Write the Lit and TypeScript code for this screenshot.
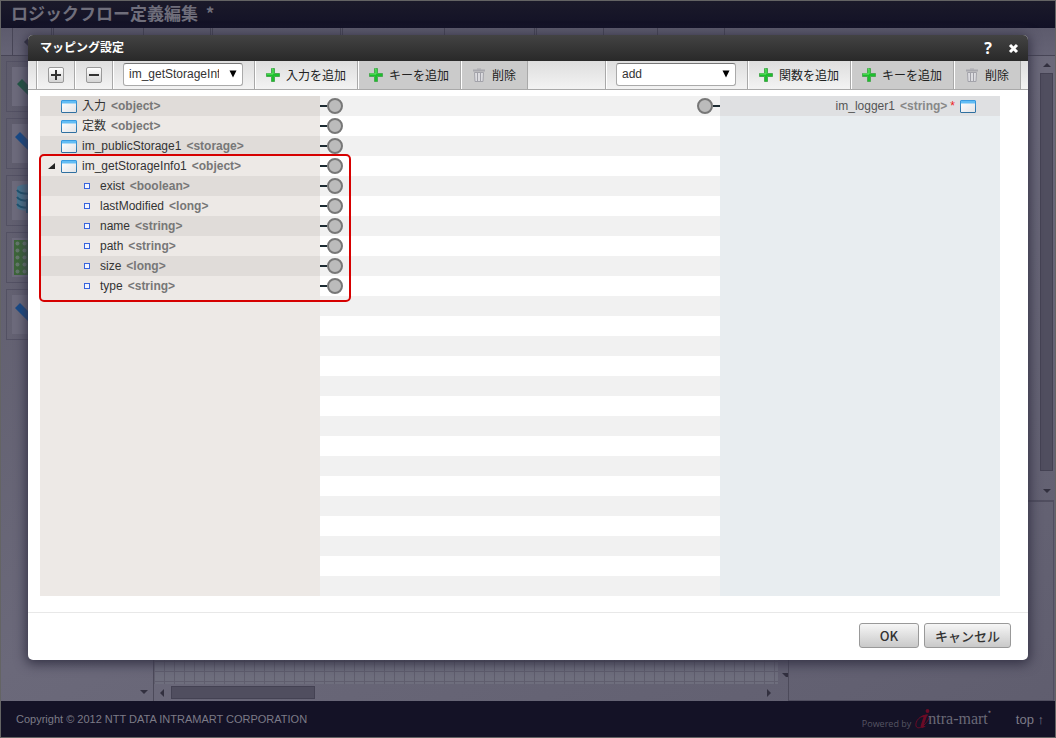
import { LitElement, html, svg, css } from "lit";
import { customElement } from "lit/decorators.js";

interface Field {
  name: string;
  type: string;
}

const inputs: Field[] = [
  { name: "入力", type: "object" },
  { name: "定数", type: "object" },
  { name: "im_publicStorage1", type: "storage" },
];

const storageInfo: Field = { name: "im_getStorageInfo1", type: "object" };

const storageFields: Field[] = [
  { name: "exist", type: "boolean" },
  { name: "lastModified", type: "long" },
  { name: "name", type: "string" },
  { name: "path", type: "string" },
  { name: "size", type: "long" },
  { name: "type", type: "string" },
];

const plusIcon = html`<svg class="icon" width="14" height="14" viewBox="0 0 14 14" aria-hidden="true">
  <path d="M5.500 .5h3v5h5v3h-5v5h-3v-5h-5v-3h5z" fill="#1cc02c" stroke="#4aa852" />
  <path d="M6 1h1v5H1" fill="none" stroke="#6be66c" />
</svg>`;

const trashIcon = html`<svg class="icon" width="14" height="14" viewBox="0 0 14 14" aria-hidden="true">
  <path d="M2.500 4.500h9l-.5 9H3z" fill="#dcdce0" stroke="#a3a3aa" />
  <path d="M1 2.500h12" stroke="#a8a8ae" stroke-width="2" />
  <path d="M5 1h4" stroke="#a8a8ae" />
  <path d="M5.500 5v8M8.500 5v8" stroke="#a0a0a8" />
</svg>`;

const windowIcon = html`<svg class="window" width="16" height="13" viewBox="0 0 16 13" aria-hidden="true">
  <defs>
    <linearGradient id="pane" x1="0" y1="0" x2="1" y2="1">
      <stop offset="0" stop-color="#ffffff" />
      <stop offset="1" stop-color="#e2e3e6" />
    </linearGradient>
    <linearGradient id="edge" x1="0" y1="0" x2="0" y2="1">
      <stop offset="0" stop-color="#3a9be0" />
      <stop offset="1" stop-color="#2f6f9f" />
    </linearGradient>
  </defs>
  <rect x=".5" y=".5" width="15" height="12" rx=".5" fill="url(#pane)" stroke="url(#edge)" />
  <path d="M1 1h14v2.500H1z" fill="#62bdf5" />
</svg>`;

const checkArt = (color: string) => svg`<path d="M3 13l5-5 8 8L28 4l5 5-17 17z" fill=${color} />`;

const greenCheckArt = svg`<path d="M5 17l5-5 8 8L30 8l5 5-17 17z" fill="#1f5742" />`;

const databaseArt = svg`
  <path d="M5 7c0-5 22-5 22 0v19c0 5-22 5-22 0z" fill="#4b7791" />
  <path d="M5 9c3 5 19 5 22 0M5 16c3 5 19 5 22 0M5 23c3 5 19 5 22 0" fill="none" stroke="#1c536f" stroke-width="2" />
  <path d="M14 18h10v14H14z" fill="#1c536f" />`;

const gridArt = svg`
  <defs>
    <pattern id="dots" x="2" y="2" width="7" height="7" patternUnits="userSpaceOnUse">
      <rect width="7" height="7" fill="#3c6638" />
      <circle cx="3.500" cy="3.500" r="2" fill="#66796c" />
    </pattern>
  </defs>
  <rect x="2" y="2" width="35" height="35" fill="url(#dots)" />`;

@customElement("app-root")
export class AppRoot extends LitElement {
  static styles = css`
    :host {
      display: block;
      font-family: "Liberation Sans", "Noto Sans CJK JP", sans-serif;
      font-size: 12px;
      color: #333;
    }
    *,
    *::before,
    *::after {
      box-sizing: border-box;
    }
    svg {
      display: block;
      flex: none;
    }
    .page {
      position: relative;
      display: grid;
      grid-template-rows: 27px 28px 1fr 36px;
      height: 100vh;
      overflow: hidden;
      border: 1px solid #646464;
      background: linear-gradient(150deg, #5c5a6a, #6b697a 50%, #5f5d6e);
    }
    .title {
      margin: 0;
      padding-left: 10px;
      background: linear-gradient(#1b1a2a, #121126);
      color: #6f6e7b;
      font: bold 17px/24px "Noto Sans CJK JP", sans-serif;
      white-space: pre;
    }
    .menu {
      display: flex;
      border-bottom: 1px solid #474556;
      background: linear-gradient(#5d5b6d, #656375);
    }
    .menu i {
      border-right: 1px solid #474556;
    }
    .menu .back {
      padding: 9px 0 0 11px;
    }
    .w1 { width: 12px; }
    .w2 { width: 39px; }
    .w3 { width: 2px; }
    .w4 { width: 90px; }
    .w5 { width: 67px; }
    .w6 { width: 128px; }
    .w7 { width: 102px; }
    .w8 { width: 54px; }
    .work {
      display: grid;
      grid-template-columns: 153px 634px 1fr;
      min-height: 0;
    }
    .palette {
      display: flex;
      flex-direction: column;
      gap: 6px;
      padding: 5px;
      border-right: 1px solid #4c4a5a;
      overflow: hidden;
    }
    .tool {
      flex: none;
      height: 51px;
      padding: 5px;
      border: 1px solid #535163;
    }
    .tool svg {
      background: #6d6b7c;
    }
    .palette .arrow {
      margin: auto 0 2px auto;
    }
    .arrow {
      fill: #32303f;
    }
    .canvas {
      display: grid;
      grid-template: 1fr 17px / 1fr 10px;
    }
    .sheet {
      background:
        linear-gradient(#605e6e 1px, transparent 1px) 0 5px / 10px 10px,
        linear-gradient(90deg, #605e6e 1px, #6e6e7d 1px) 0 0 / 10px 10px;
    }
    .vbar {
      display: flex;
      align-items: flex-end;
      padding-bottom: 7px;
    }
    .hbar {
      display: flex;
      align-items: center;
      gap: 7px;
      padding: 0 7px 0 6px;
    }
    .hbar .thumb {
      width: 144px;
      height: 13px;
      margin-right: auto;
    }
    .thumb {
      background: #504e5f;
      border: 1px solid #444253;
    }
    .side {
      display: grid;
      grid-template-rows: 444px 1fr;
      border-left: 1px solid #4c4a5a;
    }
    .scroll {
      display: flex;
      flex-direction: column;
      align-items: center;
      justify-self: end;
      gap: 6px;
      width: 17px;
      padding: 7px 0;
    }
    .scroll .thumb {
      width: 13px;
      flex: 1;
      margin-bottom: 12px;
    }
    .properties {
      margin-right: 1px;
      border: 1px solid #504e5f;
      border-width: 2px 1px 1px 0;
    }
    .footer {
      display: flex;
      align-items: center;
      padding: 0 11px 0 15px;
      background: #141226;
      color: #7c7b87;
      font-size: 11px;
    }
    .powered {
      display: flex;
      align-items: flex-end;
      gap: 4px;
      margin: 0 25px 0 auto;
      font: 9px/12px "Open Sans", sans-serif;
      color: #565563;
    }
    .brand {
      display: flex;
      align-items: center;
      font: 16px/20px "Liberation Serif", serif;
      color: #6a6976;
    }
    .brand svg {
      margin-right: -4px;
    }
    .brand sup {
      font-size: 5px;
      line-height: 8px;
      align-self: flex-start;
    }
    .footer a {
      color: #7c7b87;
      font-size: 13px;
      text-decoration: none;
    }

    .overlay {
      position: absolute;
      inset: 0;
      padding: 34px 27px 77px;
      display: grid;
    }
    .dialog {
      display: grid;
      grid-template-rows: 26px 29px 1fr 47px;
      border-radius: 5px;
      overflow: hidden;
      background: #fff;
      box-shadow: 0 2px 12px 2px #353346;
    }
    .bar {
      display: flex;
      align-items: center;
      gap: 16px;
      padding: 0 9px 0 12px;
      background: linear-gradient(#434343, #292929);
      color: #fff;
    }
    .bar h2 {
      margin: 0 auto 0 0;
      padding-bottom: 2px;
      font: bold 12px/20px "Noto Sans CJK JP", sans-serif;
    }
    .bar button {
      padding: 0;
      border: 0;
      background: none;
      color: #fff;
      font: bold 16px/20px "Open Sans", sans-serif;
    }
    .tools {
      display: flex;
      padding: 0 7px 0 8px;
      border-bottom: 1px solid #a9a9a9;
      background: linear-gradient(#dedede, #f3f3f3);
    }
    .cell {
      display: flex;
      align-items: center;
      justify-content: center;
      width: 38px;
      border-left: 1px solid #a9a9a9;
      box-shadow: inset 1px 0 #fff;
    }
    .wide {
      position: relative;
      width: 142px;
      padding: 0 11px 2px 10px;
    }
    .spacer {
      flex: 1;
      border-left: 1px solid #a9a9a9;
    }
    .fold {
      display: grid;
      place-items: center;
      width: 16px;
      height: 16px;
      padding: 0;
      border: 1px solid #999;
      border-radius: 2px;
      background: linear-gradient(#fff, #d4d4d4);
    }
    select {
      appearance: none;
      width: 120px;
      height: 23px;
      margin: 0;
      padding: 0 23px 0 5px;
      border: 1px solid #aaa;
      border-top-color: #777;
      border-radius: 3px;
      background: #fff;
      color: #333;
      font: 12px/20px "Liberation Sans", sans-serif;
    }
    .wide svg {
      position: absolute;
      right: 17px;
      top: 9px;
      pointer-events: none;
    }
    .action {
      display: flex;
      align-items: center;
      gap: 6px;
      padding: 0 11px;
      border: 0;
      border-left: 1px solid #a9a9a9;
      background: none;
      box-shadow: inset 1px 0 #fff;
      color: #222;
      font: 12px/20px "Noto Sans CJK JP", sans-serif;
      white-space: nowrap;
    }
    .action.off {
      background: #cbcbcb;
    }
    .end {
      border-right: 1px solid #a9a9a9;
    }

    .mapping {
      display: grid;
      grid-template-columns: 280px 1fr 280px;
      padding: 6px 28px 16px 12px;
      border-bottom: 1px solid #e8e8e8;
    }
    .source {
      background: #ede9e6;
    }
    .target {
      background: #e8edf0;
    }
    .wires {
      display: flex;
      justify-content: space-between;
      background: repeating-linear-gradient(#f1f1f1 0 20px, #fff 20px 40px);
    }
    ul {
      margin: 0;
      padding: 0;
      list-style: none;
    }
    .row {
      display: flex;
      align-items: center;
      gap: 5px;
      height: 20px;
      padding-left: 21px;
      line-height: 20px;
      white-space: nowrap;
    }
    .row b {
      color: #777;
    }
    .row.dark,
    .fields .row:nth-child(odd) {
      background: #e0dcd9;
    }
    .parent {
      padding-left: 8px;
    }
    .group {
      position: relative;
    }
    .group::after {
      content: "";
      position: absolute;
      inset: -2px -31px -6px -1px;
      border: 2px solid #d60000;
      border-radius: 5px;
      pointer-events: none;
    }
    .fields .row {
      padding-left: 44px;
    }
    .dot {
      width: 6px;
      height: 6px;
      margin-right: 5px;
      border: 1px solid #3763dd;
      background: #f2f5ff;
    }
    .target .row {
      justify-content: flex-end;
      padding: 0 24px 0 0;
      background: #dfe0e2;
      color: #555;
    }
    .target .row b {
      color: #888;
    }
    .target .row em {
      margin: 0 0 0 -2px;
      color: #e22;
      font-style: normal;
    }
    .port {
      display: flex;
      align-items: center;
      width: 23px;
      height: 20px;
    }
    .port::before {
      content: "";
      flex: 1;
      height: 2px;
      background: #1e2c33;
    }
    .port::after {
      content: "";
      width: 16px;
      height: 16px;
      border: 2px solid #777;
      border-radius: 50%;
      background: #bbb;
    }
    .port.in {
      flex-direction: row-reverse;
    }
    .buttons {
      display: flex;
      justify-content: flex-end;
      gap: 5px;
      padding: 10px 17px 12px;
    }
    .buttons button {
      min-width: 60px;
      padding: 0 10px;
      border: 1px solid #999;
      border-radius: 3px;
      background: linear-gradient(#f6f6f6, #c9c9c9);
      color: #333;
      font: 500 13px/20px "Noto Sans CJK JP", sans-serif;
    }
  `;

  private label(field: Field) {
    return html`<span>${field.name}</span><b>&lt;${field.type}&gt;</b>`;
  }

  private arrow(points: string, width: number, height: number) {
    return html`<svg class="arrow" width=${width} height=${height} aria-hidden="true"><polygon points=${points} /></svg>`;
  }

  private selector(name: string, value: string) {
    return html`<div class="cell wide">
      <select aria-label=${name}>
        <option>${value}</option>
      </select>
      <svg width="8" height="8" viewBox="0 0 8 8" aria-hidden="true"><path d="M.5 .5h7L4 7.500z" fill="#000" /></svg>
    </div>`;
  }

  private actions(add: string) {
    return html`
      <button class="action">${plusIcon}${add}</button>
      <button class="action off">${plusIcon}キーを追加</button>
      <button class="action off">${trashIcon}削除</button>
    `;
  }

  private background() {
    const art = [greenCheckArt, checkArt("#164a88"), databaseArt, gridArt, checkArt("#164a88")];
    const menu = ["w3", "w4", "w5", "w3", "w6", "w3", "w7", "w4", "w3", "w5", "w8", "w5"];
    return html`
      <h1 class="title">ロジックフロー定義編集  *</h1>
      <div class="menu">
        <i class="w1"></i>
        <i class="w2 back"><svg width="8" height="10" viewBox="0 0 8 10"><path d="M0 5l5-5v10z" fill="#2c2a3a" /></svg></i>
        ${menu.map((w) => html`<i class=${w}></i>`)}
      </div>
      <div class="work">
        <div class="palette">
          ${art.map(
            (shape) => html`<div class="tool"><svg width="39" height="39" viewBox="0 0 39 39">${shape}</svg></div>`
          )}
          ${this.arrow("0,0 8,0 4,4", 8, 4)}
        </div>
        <div class="canvas">
          <div class="sheet"></div>
          <div class="vbar">${this.arrow("4,0 10,0 10,4 8,4", 10, 4)}</div>
          <div class="hbar">
            ${this.arrow("4,0 4,8 0,4", 4, 8)}
            <div class="thumb"></div>
            ${this.arrow("0,0 4,4 0,8", 4, 8)}
          </div>
        </div>
        <div class="side">
          <div class="scroll">
            ${this.arrow("0,4 8,4 4,0", 8, 4)}
            <div class="thumb"></div>
            ${this.arrow("0,0 8,0 4,4", 8, 4)}
          </div>
          <div class="properties"></div>
        </div>
      </div>
      <footer class="footer">
        <span>Copyright © 2012 NTT DATA INTRAMART CORPORATION</span>
        <span class="powered">
          Powered by
          <span class="brand">
            <svg width="17" height="22" viewBox="0 0 17 22" aria-hidden="true">
              <circle cx="12.500" cy="3" r="1.900" fill="#6b0b26" />
              <path d="M5 9.500Q8 6.500 12.500 6.500L9 16.500q-.6 2.500 2.500 1-3.500 3.500-5.500 2-.8-1 0-3L8.500 9z" fill="#6b0b26" />
              <path d="M13 7C5 7 0 13 1 18c1 3 5 2 8-1s6-7 5-9" fill="none" stroke="#6b0b26" />
            </svg>
            ntra-mart<sup>●</sup>
          </span>
        </span>
        <a href="#">top ↑</a>
      </footer>
    `;
  }

  render() {
    return html`
      <div class="page">
        ${this.background()}
        <div class="overlay">
          <section class="dialog" role="dialog" aria-labelledby="heading">
            <header class="bar">
              <h2 id="heading">マッピング設定</h2>
              <button aria-label="ヘルプ">?</button>
              <button aria-label="閉じる">
                <svg width="11" height="11" viewBox="0 0 11 11"><path d="M2 2l7 7M9 2l-7 7" stroke="#fff" stroke-width="3" /></svg>
              </button>
            </header>
            <div class="tools">
              <div class="cell">
                <button class="fold" aria-label="すべて展開">
                  <svg width="10" height="10" viewBox="0 0 10 10"><path d="M0 5h10M5 0v10" stroke="#333" stroke-width="2" /></svg>
                </button>
              </div>
              <div class="cell">
                <button class="fold" aria-label="すべて折りたたむ">
                  <svg width="10" height="10" viewBox="0 0 10 10"><path d="M0 5h10" stroke="#333" stroke-width="2" /></svg>
                </button>
              </div>
              ${this.selector("入力", "im_getStorageInfo1")} ${this.actions("入力を追加")}
              <div class="spacer"></div>
              ${this.selector("関数", "add")} ${this.actions("関数を追加")}
              <div class="end"></div>
            </div>
            <div class="mapping">
              <div class="source">
                <ul>
                  ${inputs.map(
                    (field, i) => html`<li class="row ${i % 2 ? "" : "dark"}">${windowIcon}${this.label(field)}</li>`
                  )}
                  <li class="group">
                    <div class="row parent">
                      <svg width="8" height="6" viewBox="0 0 8 6"><path d="M7 0v6H0z" fill="#222" /></svg>
                      ${windowIcon}${this.label(storageInfo)}
                    </div>
                    <ul class="fields">
                      ${storageFields.map(
                        (field) => html`<li class="row"><span class="dot"></span>${this.label(field)}</li>`
                      )}
                    </ul>
                  </li>
                </ul>
              </div>
              <div class="wires">
                <div>
                  ${[...inputs, storageInfo, ...storageFields].map(() => html`<div class="port"></div>`)}
                </div>
                <div><div class="port in"></div></div>
              </div>
              <div class="target">
                <div class="row">
                  ${this.label({ name: "im_logger1", type: "string" })}<em>*</em>${windowIcon}
                </div>
              </div>
            </div>
            <div class="buttons">
              <button>OK</button>
              <button>キャンセル</button>
            </div>
          </section>
        </div>
      </div>
    `;
  }
}
